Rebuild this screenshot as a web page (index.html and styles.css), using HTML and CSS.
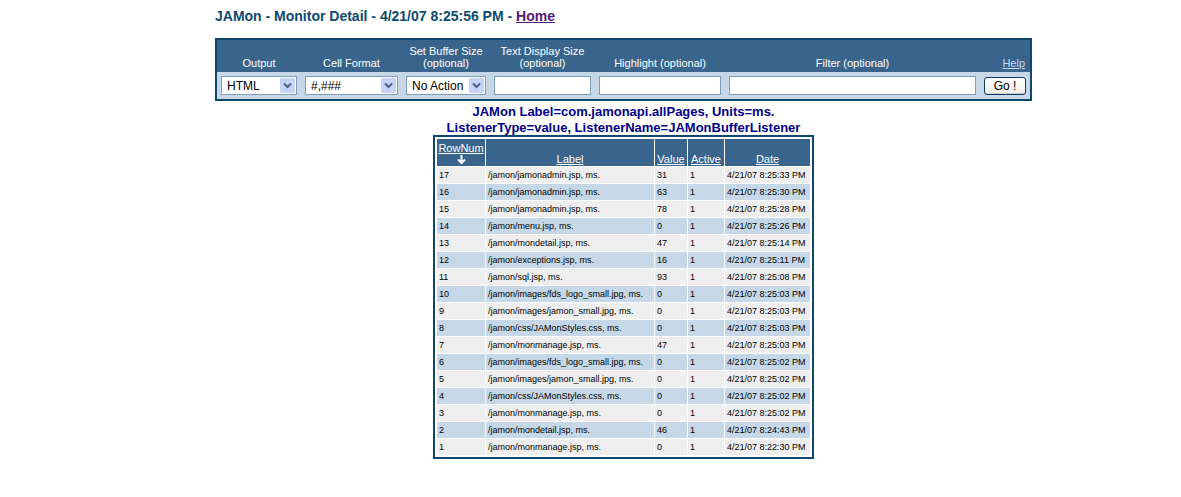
FILE: index.html
```html
<!DOCTYPE html>
<html lang="en">
<head>
<meta charset="utf-8">
<title>JAMon - Monitor Detail</title>
<link rel="stylesheet" href="styles.css">
</head>
<body>
<main class="page">
<h1 class="title">JAMon - Monitor Detail - 4/21/07 8:25:56 PM - <a class="home" href="#">Home</a></h1>
<form class="panel">
<table class="controls">
<colgroup><col class="c-output"><col class="c-format"><col class="c-buffer"><col class="c-text"><col class="c-highlight"><col><col class="c-go"></colgroup>
<tr class="labels">
<th><label for="output">Output</label></th>
<th><label for="format">Cell Format</label></th>
<th><label for="buffer">Set Buffer Size<br>(optional)</label></th>
<th><label for="textsize">Text Display Size<br>(optional)</label></th>
<th><label for="highlight">Highlight (optional)</label></th>
<th><label for="filter">Filter (optional)</label></th>
<th class="help-cell"><a class="help" href="#">Help</a></th>
</tr>
<tr class="fields">
<td><div class="pick"><select id="output"><option>HTML</option></select><svg class="arrow" viewBox="0 0 15 15"><rect width="15" height="15" rx="1"/><path d="M4 5.5l3.5 3.5L11 5.5"/></svg></div></td>
<td><div class="pick"><select id="format"><option>#,###</option></select><svg class="arrow" viewBox="0 0 15 15"><rect width="15" height="15" rx="1"/><path d="M4 5.5l3.5 3.5L11 5.5"/></svg></div></td>
<td><div class="pick"><select id="buffer"><option>No Action</option></select><svg class="arrow" viewBox="0 0 15 15"><rect width="15" height="15" rx="1"/><path d="M4 5.5l3.5 3.5L11 5.5"/></svg></div></td>
<td><input class="text" type="text" id="textsize"></td>
<td><input class="text" type="text" id="highlight"></td>
<td><input class="text" type="text" id="filter"></td>
<td><button class="go" type="button">Go !</button></td>
</tr>
</table>
</form>
<h2 class="caption">JAMon Label=com.jamonapi.allPages, Units=ms.<br>ListenerType=value, ListenerName=JAMonBufferListener</h2>
<table class="detail">
<colgroup><col class="d-row"><col class="d-label"><col class="d-value"><col class="d-active"><col class="d-date"></colgroup>
<thead><tr>
<th><a href="#">RowNum</a><svg class="sort" viewBox="0 0 9 10"><path d="M4.5 0v8M1 4.5l3.5 3.5L8 4.5"/></svg></th>
<th><a href="#">Label</a></th><th><a href="#">Value</a></th><th><a href="#">Active</a></th><th><a href="#">Date</a></th>
</tr></thead>
<tbody>
<tr><td>17</td><td>/jamon/jamonadmin.jsp, ms.</td><td>31</td><td>1</td><td>4/21/07 8:25:33 PM</td></tr>
<tr><td>16</td><td>/jamon/jamonadmin.jsp, ms.</td><td>63</td><td>1</td><td>4/21/07 8:25:30 PM</td></tr>
<tr><td>15</td><td>/jamon/jamonadmin.jsp, ms.</td><td>78</td><td>1</td><td>4/21/07 8:25:28 PM</td></tr>
<tr><td>14</td><td>/jamon/menu.jsp, ms.</td><td>0</td><td>1</td><td>4/21/07 8:25:26 PM</td></tr>
<tr><td>13</td><td>/jamon/mondetail.jsp, ms.</td><td>47</td><td>1</td><td>4/21/07 8:25:14 PM</td></tr>
<tr><td>12</td><td>/jamon/exceptions.jsp, ms.</td><td>16</td><td>1</td><td>4/21/07 8:25:11 PM</td></tr>
<tr><td>11</td><td>/jamon/sql.jsp, ms.</td><td>93</td><td>1</td><td>4/21/07 8:25:08 PM</td></tr>
<tr><td>10</td><td>/jamon/images/fds_logo_small.jpg, ms.</td><td>0</td><td>1</td><td>4/21/07 8:25:03 PM</td></tr>
<tr><td>9</td><td>/jamon/images/jamon_small.jpg, ms.</td><td>0</td><td>1</td><td>4/21/07 8:25:03 PM</td></tr>
<tr><td>8</td><td>/jamon/css/JAMonStyles.css, ms.</td><td>0</td><td>1</td><td>4/21/07 8:25:03 PM</td></tr>
<tr><td>7</td><td>/jamon/monmanage.jsp, ms.</td><td>47</td><td>1</td><td>4/21/07 8:25:03 PM</td></tr>
<tr><td>6</td><td>/jamon/images/fds_logo_small.jpg, ms.</td><td>0</td><td>1</td><td>4/21/07 8:25:02 PM</td></tr>
<tr><td>5</td><td>/jamon/images/jamon_small.jpg, ms.</td><td>0</td><td>1</td><td>4/21/07 8:25:02 PM</td></tr>
<tr><td>4</td><td>/jamon/css/JAMonStyles.css, ms.</td><td>0</td><td>1</td><td>4/21/07 8:25:02 PM</td></tr>
<tr><td>3</td><td>/jamon/monmanage.jsp, ms.</td><td>0</td><td>1</td><td>4/21/07 8:25:02 PM</td></tr>
<tr><td>2</td><td>/jamon/mondetail.jsp, ms.</td><td>46</td><td>1</td><td>4/21/07 8:24:43 PM</td></tr>
<tr><td>1</td><td>/jamon/monmanage.jsp, ms.</td><td>0</td><td>1</td><td>4/21/07 8:22:30 PM</td></tr>
</tbody>
</table>
</main>
</body>
</html>
```
FILE: styles.css
```css
* { box-sizing: border-box; }
body { margin: 0; background: #fff; color: #000; font-family: "Liberation Sans", Arial, sans-serif; }
.page { padding: 8px 149px 24px 215px; }
.title { margin: 0 0 14px; font-size: 14px; line-height: 16px; color: #0d4a70; }
.home { color: #551a7b; }
.panel { border: 2px solid #0d476c; background: #c6d8e8; }
.controls { width: 100%; table-layout: fixed; border-collapse: collapse; }
.c-output { width: 84px; }
.c-format { width: 101px; }
.c-buffer { width: 88px; }
.c-text { width: 105px; }
.c-highlight { width: 130px; }
.c-go { width: 50px; }
.labels { background: #39648c; color: #fff; }
.labels th { height: 32px; padding: 0 0 3px; vertical-align: bottom; font-size: 11px; line-height: 12px; font-weight: normal; white-space: nowrap; }
.labels .help-cell { text-align: right; padding-right: 5px; }
.help { color: #c6d8f0; }
.fields td { padding: 4px; vertical-align: middle; }
.pick { display: grid; align-items: center; }
.pick select, .arrow { grid-area: 1 / 1; }
.pick select, .text { display: block; width: 100%; height: 19px; margin: 0; border: 1px solid #7f9db9; border-radius: 0; background: #fff; color: #000; font-family: inherit; font-size: 12px; }
.pick select { appearance: none; padding: 0 0 0 5px; }
.arrow { width: 15px; height: 15px; justify-self: end; margin-right: 2px; pointer-events: none; }
.arrow rect { fill: #c5d3f8; }
.arrow path { fill: none; stroke: #4d6185; stroke-width: 2; }
.go { display: block; width: 100%; height: 18px; padding: 0; border: 1px solid #123c68; border-radius: 3px; background: linear-gradient(#fff, #efeee9); box-shadow: inset 0 -1px #d2cdc2; font-family: inherit; font-size: 12px; line-height: 14px; color: #000; }
.caption { margin: 3px 0 0; text-align: center; font-size: 13px; line-height: 16px; color: #00008b; }
.detail { margin: -1px auto 0; padding: 1px; table-layout: fixed; width: 381px; border: 2px solid #0d476c; border-collapse: separate; border-spacing: 1px; font-size: 9px; }
.d-row { width: 48px; }
.d-label { width: 168px; }
.d-value { width: 32px; }
.d-active { width: 36px; }
.d-date { width: 85px; }
.detail th { height: 27px; padding: 0 0 1px; background: #39648c; vertical-align: bottom; font-size: 11px; line-height: 12px; font-weight: normal; color: #fff; }
.detail th a { color: inherit; }
.detail td { height: 16px; padding: 0 2px; line-height: 16px; white-space: nowrap; background: #eee; }
.detail tbody tr:nth-child(even) td { background: #c6d8e8; }
.sort { display: block; width: 9px; height: 10px; margin: 1px auto 0; fill: none; stroke: #fff; stroke-width: 2; }
```
